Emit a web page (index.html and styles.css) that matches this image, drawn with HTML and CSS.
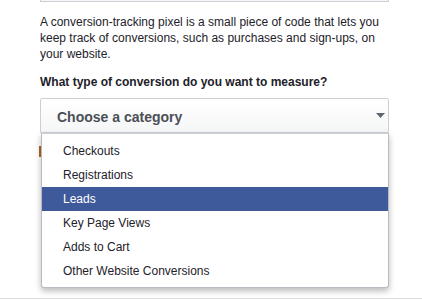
FILE: index.html
```html
<!DOCTYPE html>
<html>
<head>
<meta charset="utf-8">
<link rel="stylesheet" href="styles.css">
</head>
<body>
<div class="wrap">
  <div class="prev-input"></div>
  <p class="intro">A conversion-tracking pixel is a small piece of code that lets you keep track of conversions, such as purchases and sign-ups, on your website.</p>
  <div class="label">What type of conversion do you want to measure?</div>
  <div class="select-area">
    <div class="select">
      <span class="select-text">Choose a category</span>
      <svg class="caret" width="9" height="5" viewBox="0 0 9 5"><path d="M0 0H9L4.5 5Z" fill="#606770"/></svg>
    </div>
    <div class="behind">
      <div class="warn-mark"></div>
      <div class="behind-box"></div>
    </div>
    <ul class="menu">
      <li class="item">Checkouts</li>
      <li class="item">Registrations</li>
      <li class="item active">Leads</li>
      <li class="item">Key Page Views</li>
      <li class="item">Adds to Cart</li>
      <li class="item">Other Website Conversions</li>
    </ul>
  </div>
</div>
<div class="footer-line"></div>
</body>
</html>
```
FILE: styles.css
```css
html, body {
  margin: 0;
  padding: 0;
  background: #fff;
  overflow: hidden;
}
body {
  font-family: "Liberation Sans", Arial, sans-serif;
  color: #1d2129;
  font-size: 12px;
  line-height: 16px;
}
.wrap {
  padding: 0 33px 0 40px;
}
.prev-input {
  height: 1px;
  background: #f5f6f7;
  border: 1px solid #ccd0d5;
  border-top: 0;
}
.intro {
  margin: 12px 0 0;
}
.label {
  margin-top: 12px;
  font-weight: bold;
}
.select-area {
  position: relative;
  margin-top: 8px;
}
.select {
  height: 33px;
  border: 1px solid #ccd0d5;
  border-radius: 2px 2px 0 0;
  background: linear-gradient(#ffffff, #f5f6f7);
  display: flex;
  align-items: center;
  justify-content: space-between;
  padding: 0 3px 0 16px;
}
.select-text {
  font-size: 14px;
  font-weight: bold;
  color: #4b4f56;
  line-height: 18px;
  padding-top: 2px;
}
.caret {
  display: block;
}
.behind {
  height: 165px;
  padding-top: 13px;
  box-sizing: border-box;
  margin-left: -1px;
}
.warn-mark {
  width: 2px;
  height: 11px;
  background: #b5651d;
}
.behind-box {
  margin-top: 12px;
  margin-left: 1px;
  height: 30px;
  border-right: 1px solid #a8adb4;
}
.menu {
  position: absolute;
  top: 35px;
  left: 1px;
  right: 0;
  margin: 0;
  padding: 5px 0 4px;
  list-style: none;
  background: #fff;
  border: 1px solid #b8bcc2;
  border-top-color: #ccd0d5;
  border-radius: 0 0 3px 3px;
  box-shadow: 0 3px 6px rgba(0, 0, 0, 0.28);
}
.item {
  height: 24px;
  line-height: 24px;
  padding-left: 21px;
  color: #1d2129;
}
.item.active {
  background: #3f5a9b;
  color: #fff;
}
.footer-line {
  height: 0;
  border-top: 1px solid #dadde1;
}
```
